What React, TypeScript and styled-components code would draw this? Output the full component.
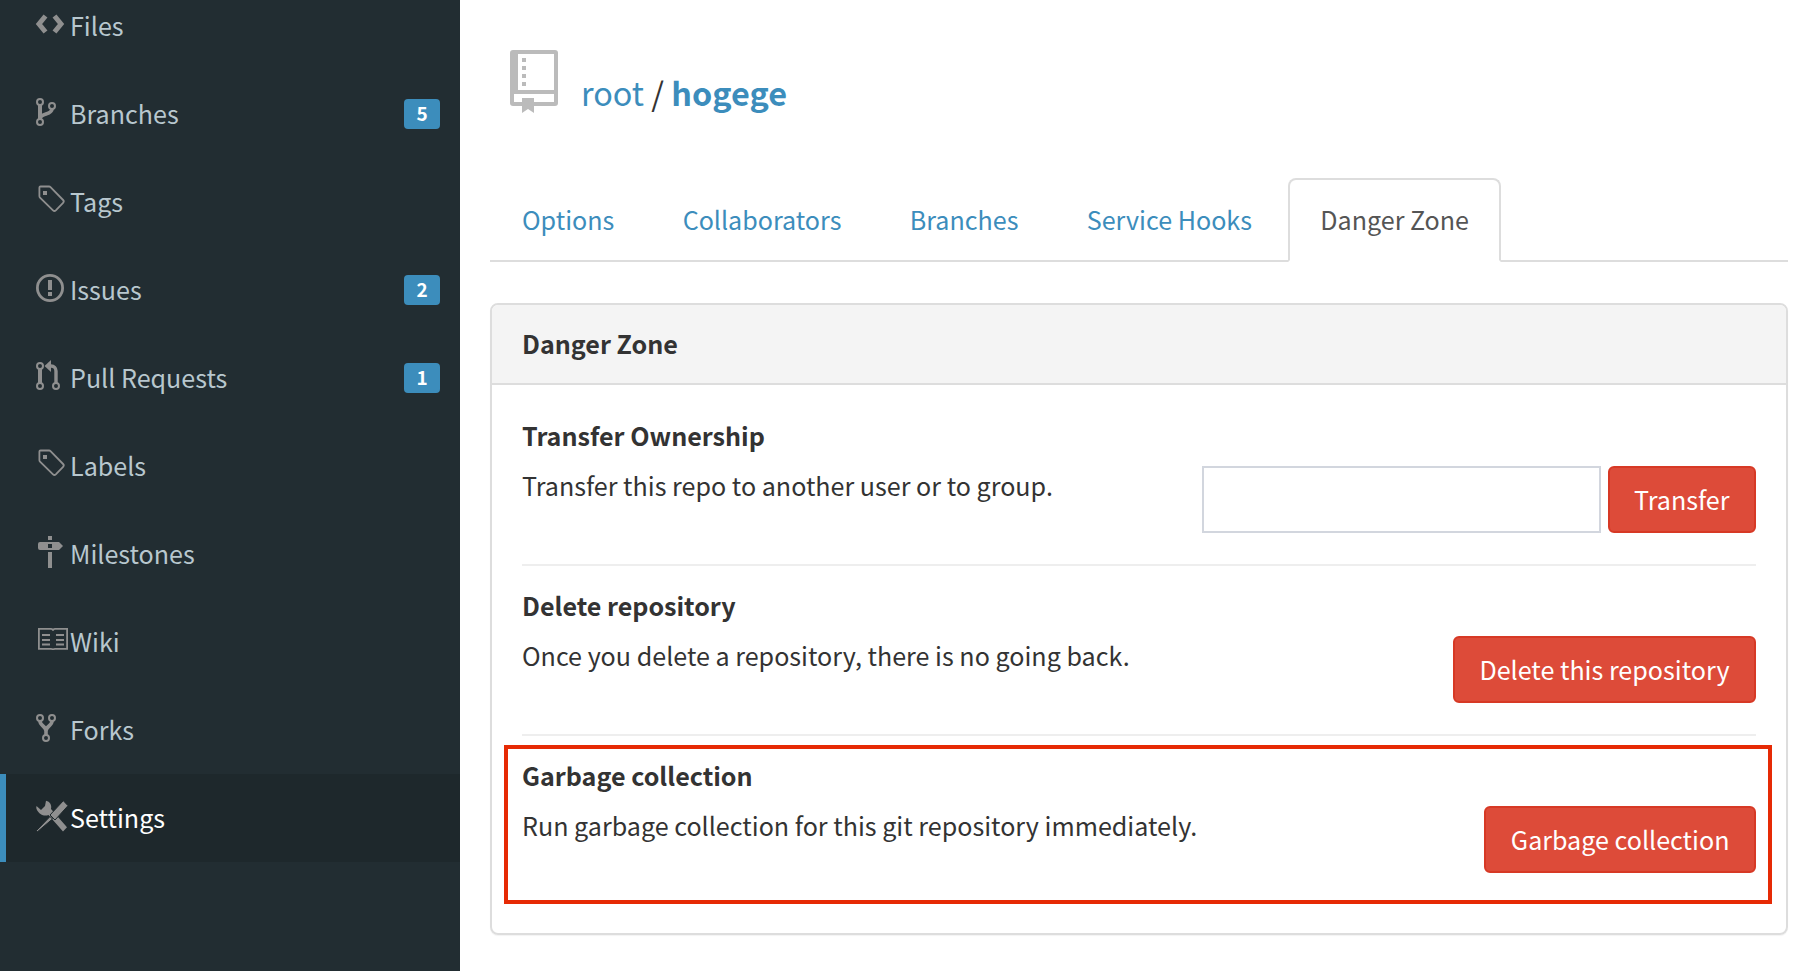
import React from 'react'
import styled, { createGlobalStyle } from 'styled-components'

const GlobalStyle = createGlobalStyle`
    html, body {
        margin: 0;
        height: 100%;
        overflow: hidden;
        background: #fff;
    }
    body {
        font-family: "Noto Sans CJK JP", "Noto Sans", sans-serif;
        font-size: 25.1px;
        color: #333;
    }
    * {
        box-sizing: border-box;
    }
`

const Page = styled.div`
    display: flex;
    height: 971px;
    overflow: hidden;
`
const Sidebar = styled.aside`
    flex: 0 0 460px;
    background: #222d32;
    overflow: hidden;
`
const Menu = styled.ul`
    list-style: none;
    margin: -18px 0 0;
    padding: 0;
`
const MenuRow = styled.li<{ $active?: boolean }>`
    display: flex;
    align-items: center;
    height: 88px;
    padding: 0 20px 0 30px;
    border-left: 6px solid ${(p) => (p.$active ? '#3c8dbc' : 'transparent')};
    background: ${(p) => (p.$active ? '#1e282c' : 'transparent')};
    color: ${(p) => (p.$active ? '#fff' : '#b8c7ce')};
`
const MenuIcon = styled.svg`
    flex: 0 0 34px;
    width: 34px;
    height: 40px;
    overflow: visible;
    color: #8f8f8f;
`
const MenuLabel = styled.span`
    flex: 1;
    padding-bottom: 2px;
    line-height: 40px;
`
const Badge = styled.span`
    width: 36px;
    height: 30px;
    border-radius: 4px;
    background: #3c8dbc;
    color: #fff;
    font-size: 19px;
    font-weight: 700;
    line-height: 27px;
    text-align: center;
`
const Main = styled.main`
    flex: 1;
    padding: 50px 15px 0 30px;
`
const RepoHeader = styled.header`
    display: flex;
    align-items: flex-end;
    gap: 23px;
    height: 63px;
    padding-left: 20px;
`
const RepoTitle = styled.h1`
    margin: 0;
    font-size: 32.4px;
    font-weight: 400;
    line-height: 42px;
    color: #333;
`
const RepoLink = styled.a<{ $strong?: boolean }>`
    color: #3c8dbc;
    font-weight: ${(p) => (p.$strong ? 700 : 400)};
`
const Tabs = styled.nav`
    display: flex;
    margin-top: 65px;
    height: 84px;
    border-bottom: 2px solid #ddd;
`
const Tab = styled.a<{ $active?: boolean }>`
    height: 84px;
    padding: 0 30px;
    margin-right: 4.3px;
    border: 2px solid ${(p) => (p.$active ? '#ddd' : 'transparent')};
    border-bottom-color: ${(p) => (p.$active ? '#fff' : 'transparent')};
    border-radius: 8px 8px 0 0;
    line-height: 78px;
    color: ${(p) => (p.$active ? '#555' : '#3c8dbc')};
`
const Panel = styled.section`
    margin-top: 41px;
    border: 2px solid #ddd;
    border-radius: 8px;
    box-shadow: 0 1px 1px rgba(0, 0, 0, 0.05);
`
const PanelHeading = styled.h2`
    margin: 0;
    height: 80px;
    padding: 0 30px;
    border-bottom: 2px solid #ddd;
    border-radius: 6px 6px 0 0;
    background: #f4f4f4;
    font-size: 25.1px;
    font-weight: 700;
    line-height: 76px;
`
const PanelBody = styled.div`
    padding: 11px 30px 0;
`
const Section = styled.div<{ $last?: boolean }>`
    position: relative;
    padding: 19px 0 ${(p) => (p.$last ? '60px' : '31px')};
    border-bottom: ${(p) => (p.$last ? 'none' : '2px solid #eee')};
`
const SectionTitle = styled.h4`
    margin: 0 0 11px;
    font-size: 25.1px;
    font-weight: 700;
    line-height: 40px;
`
const SectionRow = styled.div`
    display: flex;
    justify-content: space-between;
    align-items: flex-start;
`
const SectionText = styled.p`
    margin: 0;
    line-height: 38px;
`
const Controls = styled.div`
    display: flex;
    gap: 7px;
`
const TextInput = styled.input`
    width: 399px;
    height: 67px;
    border: 2px solid #d2d6de;
    background: #fff;
    outline: none;
`
const DangerButton = styled.button`
    height: 67px;
    padding: 0 24.5px;
    border: 2px solid #d73925;
    border-radius: 6px;
    background: #dd4b39;
    color: #fff;
    font: inherit;
    line-height: 61px;
`
const Highlight = styled.div`
    position: absolute;
    top: 9px;
    left: -18px;
    right: -16px;
    height: 159px;
    border: 4px solid #e62a05;
    pointer-events: none;
`

const Tag = () => (
    <>
        <path d="M4.500 4.500h8.500a2 2 0 0 1 1.500.6l12.600 12.900a2 2 0 0 1 0 2.800l-7.300 7.500a2 2 0 0 1-2.800 0L4 15.600a2 2 0 0 1-.6-1.500V5.600a1.100 1.100 0 0 1 1.100-1.100z" fill="none" stroke="currentColor" strokeWidth="1.8" />
        <rect x="7" y="9" width="4" height="4" fill="currentColor" />
    </>
)

const ICONS: Record<string, React.ReactNode> = {
    files: <path d="M9.500 10 3 18l6.500 8M18.500 10 25 18l-6.500 8" fill="none" stroke="currentColor" strokeWidth="5" />,
    branch: (
        <g fill="none" stroke="currentColor">
            <circle cx="4" cy="8" r="3" strokeWidth="2" />
            <circle cx="4" cy="28" r="3" strokeWidth="2" />
            <circle cx="16" cy="12" r="3" strokeWidth="2" />
            <path d="M4 11v14" strokeWidth="4" />
            <path d="M16 15c0 6-12 4-12 10" strokeWidth="3.600" />
        </g>
    ),
    tag: <Tag />,
    issue: (
        <g fill="currentColor">
            <circle cx="14" cy="18" r="12.600" fill="none" stroke="currentColor" strokeWidth="2.800" />
            <rect x="12" y="10" width="4" height="10" />
            <rect x="12" y="22" width="4" height="4" />
        </g>
    ),
    pull: (
        <g fill="none" stroke="currentColor">
            <circle cx="4" cy="8" r="3" strokeWidth="2" />
            <circle cx="4" cy="28" r="3" strokeWidth="2" />
            <circle cx="20" cy="28" r="3" strokeWidth="2" />
            <path d="M4 11v14" strokeWidth="4" />
            <path d="M20 25V13c0-3-2-5-5-5h-3" strokeWidth="3.400" />
            <path d="M15 2v12L8.500 8z" fill="currentColor" stroke="none" />
        </g>
    ),
    milestone: (
        <g fill="currentColor">
            <rect x="12" y="2" width="4" height="4" />
            <rect x="12" y="18" width="4" height="16" />
            <path fillRule="evenodd" d="M4 8h19l4 4-4 4H4a2 2 0 0 1-2-2v-4a2 2 0 0 1 2-2zm8 2v4h4v-4z" />
        </g>
    ),
    wiki: (
        <g fill="none" stroke="currentColor" strokeWidth="1.800">
            <path d="M2.900 6.900h12.100a2 2 0 0 1 2 1.600 2 2 0 0 1 2-1.600h12.100v20H19c-1 0-2 .4-2 1.200 0-.8-1-1.200-2-1.200H2.900z" />
            <path d="M6 13h8M20 13h8M6 18h8M20 18h8M6 22.500h8M20 22.500h8" />
        </g>
    ),
    fork: (
        <g fill="none" stroke="currentColor">
            <circle cx="4" cy="8" r="3" strokeWidth="2" />
            <circle cx="16" cy="8" r="3" strokeWidth="2" />
            <circle cx="10" cy="28" r="3" strokeWidth="2" />
            <path d="M4 11c0 5 6 5 6 10v4M16 11c0 5-6 5-6 10" strokeWidth="3.600" />
        </g>
    ),
    settings: (
        <g fill="currentColor">
            <path d="M10 2.800c4 .8 6 4.500 5 8.200L31 29.300l-4 4.300L12.500 17c-4 1.500-9 .3-12-6-.3-1-.3-2 0-3L5 12l4-4z" />
            <g stroke="#1e282c" strokeWidth="1">
                <path d="M27.300 2.700 32 7.700 19 22l-5-5z" />
                <path d="M14 18.500l2.500 2.500L1.500 33.700.5 32.500z" />
            </g>
        </g>
    ),
}

const MENU = [
    { icon: 'files', label: 'Files' },
    { icon: 'branch', label: 'Branches', badge: 5 },
    { icon: 'tag', label: 'Tags' },
    { icon: 'issue', label: 'Issues', badge: 2 },
    { icon: 'pull', label: 'Pull Requests', badge: 1 },
    { icon: 'tag', label: 'Labels' },
    { icon: 'milestone', label: 'Milestones' },
    { icon: 'wiki', label: 'Wiki' },
    { icon: 'fork', label: 'Forks' },
    { icon: 'settings', label: 'Settings', active: true },
]

const TABS = ['Options', 'Collaborators', 'Branches', 'Service Hooks', 'Danger Zone']

const RepoIconSvg = styled.svg`
    flex: 0 0 48px;
`

const RepoIcon = () => (
    <RepoIconSvg width="48" height="63" viewBox="0 0 48 63">
        <rect width="48" height="56" rx="3" fill="#bbb" />
        <rect x="8" y="4" width="36" height="36" fill="#fff" />
        <rect x="4" y="44" width="40" height="8" fill="#fff" />
        <path d="M12 48h12v15l-6-4-6 4z" fill="#bbb" />
        <path d="M12 8h4v4h-4zM12 16h4v4h-4zM12 24h4v4h-4zM12 32h4v4h-4z" fill="#bbb" />
    </RepoIconSvg>
)

const App = () => (
    <Page>
        <GlobalStyle />
        <Sidebar>
            <Menu>
                {MENU.map((item) => (
                    <MenuRow key={item.label} $active={item.active}>
                        <MenuIcon viewBox="0 0 34 40">{ICONS[item.icon]}</MenuIcon>
                        <MenuLabel>{item.label}</MenuLabel>
                        {item.badge && <Badge>{item.badge}</Badge>}
                    </MenuRow>
                ))}
            </Menu>
        </Sidebar>
        <Main>
            <RepoHeader>
                <RepoIcon />
                <RepoTitle>
                    <RepoLink>root</RepoLink> / <RepoLink $strong>hogege</RepoLink>
                </RepoTitle>
            </RepoHeader>
            <Tabs>
                {TABS.map((tab) => (
                    <Tab key={tab} $active={tab === 'Danger Zone'}>
                        {tab}
                    </Tab>
                ))}
            </Tabs>
            <Panel>
                <PanelHeading>Danger Zone</PanelHeading>
                <PanelBody>
                    <Section>
                        <SectionTitle>Transfer Ownership</SectionTitle>
                        <SectionRow>
                            <SectionText>Transfer this repo to another user or to group.</SectionText>
                            <Controls>
                                <TextInput />
                                <DangerButton>Transfer</DangerButton>
                            </Controls>
                        </SectionRow>
                    </Section>
                    <Section>
                        <SectionTitle>Delete repository</SectionTitle>
                        <SectionRow>
                            <SectionText>Once you delete a repository, there is no going back.</SectionText>
                            <DangerButton>Delete this repository</DangerButton>
                        </SectionRow>
                    </Section>
                    <Section $last>
                        <Highlight />
                        <SectionTitle>Garbage collection</SectionTitle>
                        <SectionRow>
                            <SectionText>Run garbage collection for this git repository immediately.</SectionText>
                            <DangerButton>Garbage collection</DangerButton>
                        </SectionRow>
                    </Section>
                </PanelBody>
            </Panel>
        </Main>
    </Page>
)

export default App
